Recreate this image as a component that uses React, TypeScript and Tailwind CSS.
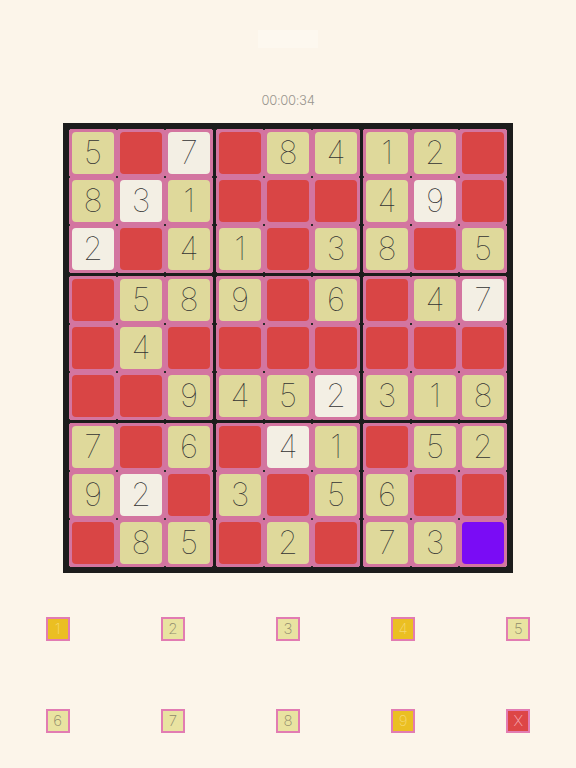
import React from 'react';

type Cell = { v?: number; kind: 'num' | 'given' | 'red' | 'sel' };

// rows of the board: digits are yellow tiles, "w" suffix = given (white), "R" = red, "P" = selected
const rows = [
  '5 R 7w R 8 4 1 2 R',
  '8 3w 1 R R R 4 9w R',
  '2w R 4 1 R 3 8 R 5',
  'R 5 8 9 R 6 R 4 7w',
  'R 4 R R R R R R R',
  'R R 9 4 5 2w 3 1 8',
  '7 R 6 R 4w 1 R 5 2',
  '9 2w R 3 R 5 6 R R',
  'R 8 5 R 2 R 7 3 P',
];

const board: Cell[][] = rows.map((r) =>
  r.split(' ').map((t) => {
    if (t === 'R') return { kind: 'red' };
    if (t === 'P') return { kind: 'sel' };
    if (t.endsWith('w')) return { kind: 'given', v: Number(t[0]) };
    return { kind: 'num', v: Number(t) };
  })
);

const tileClass: Record<Cell['kind'], string> = {
  num: 'bg-[#dfd99b]',
  given: 'bg-[#f3efe4]',
  red: 'bg-[#d94545]',
  sel: 'bg-[#7a0cf5]',
};

function Tile({ cell }: { cell: Cell }) {
  return (
    <div className="w-[48px] h-[48px] p-[3px]">
      <div
        className={`w-full h-full rounded-[4px] flex items-center justify-center text-[32px] font-thin text-[#333333] ${tileClass[cell.kind]}`}
      >
        {cell.v}
      </div>
    </div>
  );
}

function Box({ br, bc }: { br: number; bc: number }) {
  const cells: Cell[] = [];
  for (let r = 0; r < 3; r++) for (let c = 0; c < 3; c++) cells.push(board[br * 3 + r][bc * 3 + c]);
  return (
    <div className="grid grid-cols-3 bg-[#d375a0] bg-[radial-gradient(circle,#2a2a2a_0.8px,transparent_1.4px)] bg-[length:48px_48px] bg-[position:24px_24px]">
      {cells.map((cell, i) => (
        <Tile key={i} cell={cell} />
      ))}
    </div>
  );
}

const pads: { label: string; style: string }[] = [
  { label: '1', style: 'bg-[#ebbf22] text-[#f5d870]' },
  { label: '2', style: 'bg-[#e9e3a1] text-[#8f8a6c]' },
  { label: '3', style: 'bg-[#e9e3a1] text-[#8f8a6c]' },
  { label: '4', style: 'bg-[#ebbf22] text-[#f5d870]' },
  { label: '5', style: 'bg-[#e9e3a1] text-[#8f8a6c]' },
  { label: '6', style: 'bg-[#e9e3a1] text-[#8f8a6c]' },
  { label: '7', style: 'bg-[#e9e3a1] text-[#8f8a6c]' },
  { label: '8', style: 'bg-[#e9e3a1] text-[#8f8a6c]' },
  { label: '9', style: 'bg-[#ebbf22] text-[#f5d870]' },
  { label: 'X', style: 'bg-[#dd4646] text-[#f4a8b0]' },
];

export default function App() {
  return (
    <div
      className="min-h-screen bg-[#fcf5ea] flex flex-col items-center"
      style={{ fontFamily: 'Inter, "Noto Sans", sans-serif' }}
    >
      <div className="mt-[30px] w-[60px] h-[18px] bg-[#fdf8ef]" />
      <div className="mt-[44px] text-[13px] leading-[16px] font-light text-[#9a968f] tracking-[-0.3px]">
        00:00:34
      </div>
      <div className="mt-[15px] bg-[#1c1c1c] p-[6px] grid grid-cols-3 gap-[3px]">
        {[0, 1, 2].map((br) => [0, 1, 2].map((bc) => <Box key={`${br}-${bc}`} br={br} bc={bc} />))}
      </div>
      <div className="mt-[44px] w-full grid grid-cols-5 gap-y-[68px]">
        {pads.map((p) => (
          <div key={p.label} className="flex justify-center">
            <div
              className={`w-[24px] h-[24px] border-2 border-[#e27cb2] flex items-center justify-center text-[15px] font-extralight ${p.style}`}
            >
              {p.label}
            </div>
          </div>
        ))}
      </div>
    </div>
  );
}
